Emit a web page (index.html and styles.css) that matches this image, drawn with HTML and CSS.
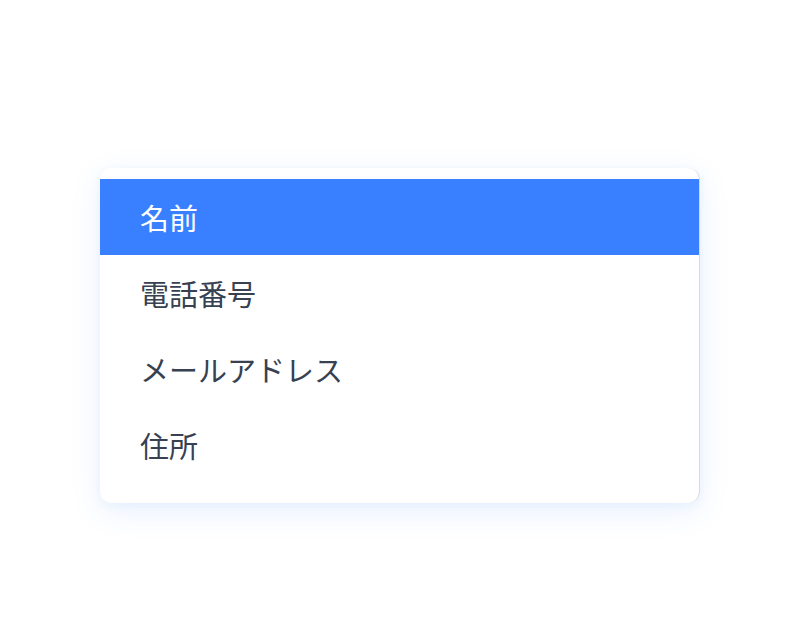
FILE: index.html
```html
<!DOCTYPE html>
<html lang="ja">
<head>
<meta charset="utf-8">
<link rel="stylesheet" href="styles.css">
</head>
<body>
<div class="stage">
  <ul class="menu">
    <li class="item active">名前</li>
    <li class="item">電話番号</li>
    <li class="item">メールアドレス</li>
    <li class="item">住所</li>
  </ul>
</div>
</body>
</html>
```
FILE: styles.css
```css
html, body {
  margin: 0;
  padding: 0;
  background: #ffffff;
}
.stage {
  width: 800px;
  height: 628px;
  display: flex;
  justify-content: center;
  padding-top: 168px;
  box-sizing: border-box;
}
.menu {
  list-style: none;
  margin: 0;
  width: 600px;
  box-sizing: border-box;
  padding: 11px 0 20px;
  background: #ffffff;
  border-radius: 12px;
  border-right: 1px solid #d6d9e0;
  box-shadow: 0 8px 30px rgba(59, 130, 246, 0.12), 0 2px 8px rgba(59, 130, 246, 0.05);
  align-self: flex-start;
}
.item {
  height: 76px;
  display: flex;
  align-items: center;
  padding-left: 40px;
  font-family: "Noto Sans CJK JP", "Noto Sans", sans-serif;
  font-size: 29px;
  color: #374151;
}
.item.active {
  background: #3880ff;
  color: #ffffff;
}
```
